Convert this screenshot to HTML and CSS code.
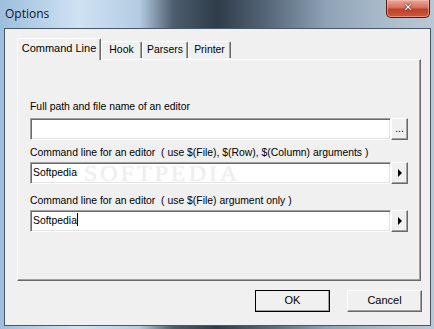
FILE: index.html
```html
<!DOCTYPE html>
<html lang="en">

<head>
    <meta charset="UTF-8">
    <title>Options</title>
    <link rel="stylesheet" href="styles.css">
</head>

<body>

    <div class="window">
        <!-- Title bar -->
        <div class="titlebar">
            <span class="title">Options</span>
            <div class="close-btn">&#x2715;</div>
        </div>

        <div class="client">
            <!-- Tabs -->
            <div class="tabs">
                <div class="tab active tab-cmd">Command Line</div>
                <div class="tab tab-hook">Hook</div>
                <div class="tab tab-parsers">Parsers</div>
                <div class="tab tab-printer">Printer</div>
            </div>

            <div class="tab-panel">
                <div class="label label-first">Full path and file name of an editor</div>
                <div class="field-row">
                    <div class="input"></div>
                    <div class="side-btn">...</div>
                </div>

                <div class="label label-second">Command line for an editor&nbsp; ( use $(File), $(Row), $(Column) arguments )</div>
                <div class="field-row field-tight">
                    <div class="input">Softpedia</div>
                    <div class="side-btn"><span class="arrow"></span></div>
                </div>

                <div class="label label-third">Command line for an editor&nbsp; ( use $(File) argument only )</div>
                <div class="field-row field-tight">
                    <div class="input">Softpedia<span class="caret"></span></div>
                    <div class="side-btn"><span class="arrow"></span></div>
                </div>

                <div class="watermark">SOFTPEDIA</div>
            </div>

            <div class="buttons">
                <div class="btn btn-default">OK</div>
                <div class="btn">Cancel</div>
            </div>
        </div>
    </div>

</body>

</html>
```

FILE: styles.css
```css
/* Global Styles */
body {
    margin: 0;
    padding: 0;
    font-family: "Liberation Sans", Arial, sans-serif;
    font-size: 10.4px;
    color: #000;
}

/* Aero glass frame */
.window {
    width: 434px;
    height: 329px;
    box-sizing: border-box;
    padding: 0 3px 3px 4px;
    display: flex;
    flex-direction: column;
    background:
        linear-gradient(90deg, #9dbedd 0%, #cfe2f2 18%, #b4cde3 32%, #4c5d6d 40%, #2f3c49 50%, #56687a 62%, #8ea2b5 75%, #a9bbcb 88%, #b9c8d6 100%);
}

.titlebar {
    height: 28px;
    display: flex;
    justify-content: space-between;
    align-items: flex-start;
}

.title {
    font-family: "Open Sans", "Noto Sans", sans-serif;
    font-size: 12px;
    margin-top: 5px;
    margin-left: 1px;
    color: #101820;
}

.close-btn {
    width: 44px;
    height: 18px;
    margin-right: 1px;
    box-sizing: border-box;
    border: 1px solid #5a1a12;
    border-top: none;
    border-radius: 0 0 5px 5px;
    background: linear-gradient(#e7a99c 0%, #d7705c 45%, #c2402a 55%, #c85a3c 100%);
    box-shadow: inset 0 0 0 1px rgba(255, 200, 190, 0.5);
    color: #fff;
    font-family: "DejaVu Sans", sans-serif;
    font-size: 11px;
    font-weight: bold;
    text-align: center;
    line-height: 16px;
    text-shadow: 0 0 2px #4a1008, 0 0 1px #4a1008;
}

.client {
    flex: 1;
    background-color: #f0f0f0;
    border: 1px solid #4a5866;
    padding: 9px 8px 0 12px;
    display: flex;
    flex-direction: column;
}

/* Tabs */
.tabs {
    display: flex;
    align-items: flex-end;
    height: 21px;
    position: relative;
    z-index: 1;
}

.tab {
    height: 17px;
    line-height: 16px;
    box-sizing: border-box;
    text-align: center;
    background-color: #f0f0f0;
    border-top: 1px solid #fff;
    border-left: 1px solid #fff;
    border-right: 1px solid #696969;
    box-shadow: inset -1px 0 0 #a0a0a0;
    border-radius: 2px 2px 0 0;
    margin-bottom: 1px;
}

.tab.active {
    height: 22px;
    line-height: 18px;
    margin-bottom: -1px;
    font-size: 11px;
}

.tab-cmd {
    width: 84px;
}

.tab-hook {
    width: 41px;
}

.tab-parsers {
    width: 46px;
}

.tab-printer {
    width: 43px;
}

.tab-panel {
    position: relative;
    width: 404px;
    height: 222px;
    box-sizing: border-box;
    border-top: 1px solid #fff;
    border-left: 1px solid #fff;
    border-right: 1px solid #696969;
    border-bottom: 1px solid #696969;
    box-shadow: inset -1px -1px 0 #a0a0a0;
    padding: 40px 0 0 12px;
}

.label {
    height: 13px;
    line-height: 13px;
    white-space: nowrap;
}

.label-second {
    margin-top: 6px;
}

.label-third {
    margin-top: 10px;
}

.field-row {
    display: flex;
    margin-top: 5px;
    height: 22px;
}

.field-tight {
    margin-top: 3px;
}

.input {
    width: 361px;
    box-sizing: border-box;
    background-color: #fff;
    border: 1px solid;
    border-color: #a0a0a0 #fff #fff #a0a0a0;
    box-shadow: inset 1px 1px 0 #696969, inset -1px -1px 0 #e3e3e3;
    padding: 0 2px;
    line-height: 20px;
}

.caret {
    display: inline-block;
    width: 1px;
    height: 13px;
    background-color: #000;
    vertical-align: -2px;
}

.side-btn {
    width: 17px;
    box-sizing: border-box;
    background-color: #f0f0f0;
    border: 1px solid;
    border-color: #fff #696969 #696969 #fff;
    box-shadow: inset -1px -1px 0 #a0a0a0;
    text-align: center;
    line-height: 18px;
    display: flex;
    align-items: center;
    justify-content: center;
}

.arrow {
    width: 0;
    height: 0;
    border-top: 4px solid transparent;
    border-bottom: 4px solid transparent;
    border-left: 4px solid #000;
    margin-left: 1px;
}

/* Faint site watermark, kept clear of the field texts */
.watermark {
    position: absolute;
    left: 66px;
    top: 102px;
    height: 22px;
    line-height: 22px;
    font-family: "Liberation Serif", serif;
    font-size: 24px;
    letter-spacing: 3px;
    color: rgba(255, 255, 255, 0.5);
    text-shadow: 0 0 1px rgba(140, 140, 140, 0.3);
    pointer-events: none;
}

/* Dialog buttons */
.buttons {
    display: flex;
    justify-content: flex-end;
    gap: 17px;
    margin-top: 9px;
}

.btn {
    width: 75px;
    height: 22px;
    box-sizing: border-box;
    background-color: #f0f0f0;
    border: 1px solid;
    border-color: #fff #696969 #696969 #fff;
    box-shadow: inset -1px -1px 0 #a0a0a0;
    text-align: center;
    line-height: 19px;
    font-size: 11px;
}

.btn-default {
    outline: 1px solid #000;
    outline-offset: -1px;
    border-color: #fff #404040 #404040 #fff;
}
```
